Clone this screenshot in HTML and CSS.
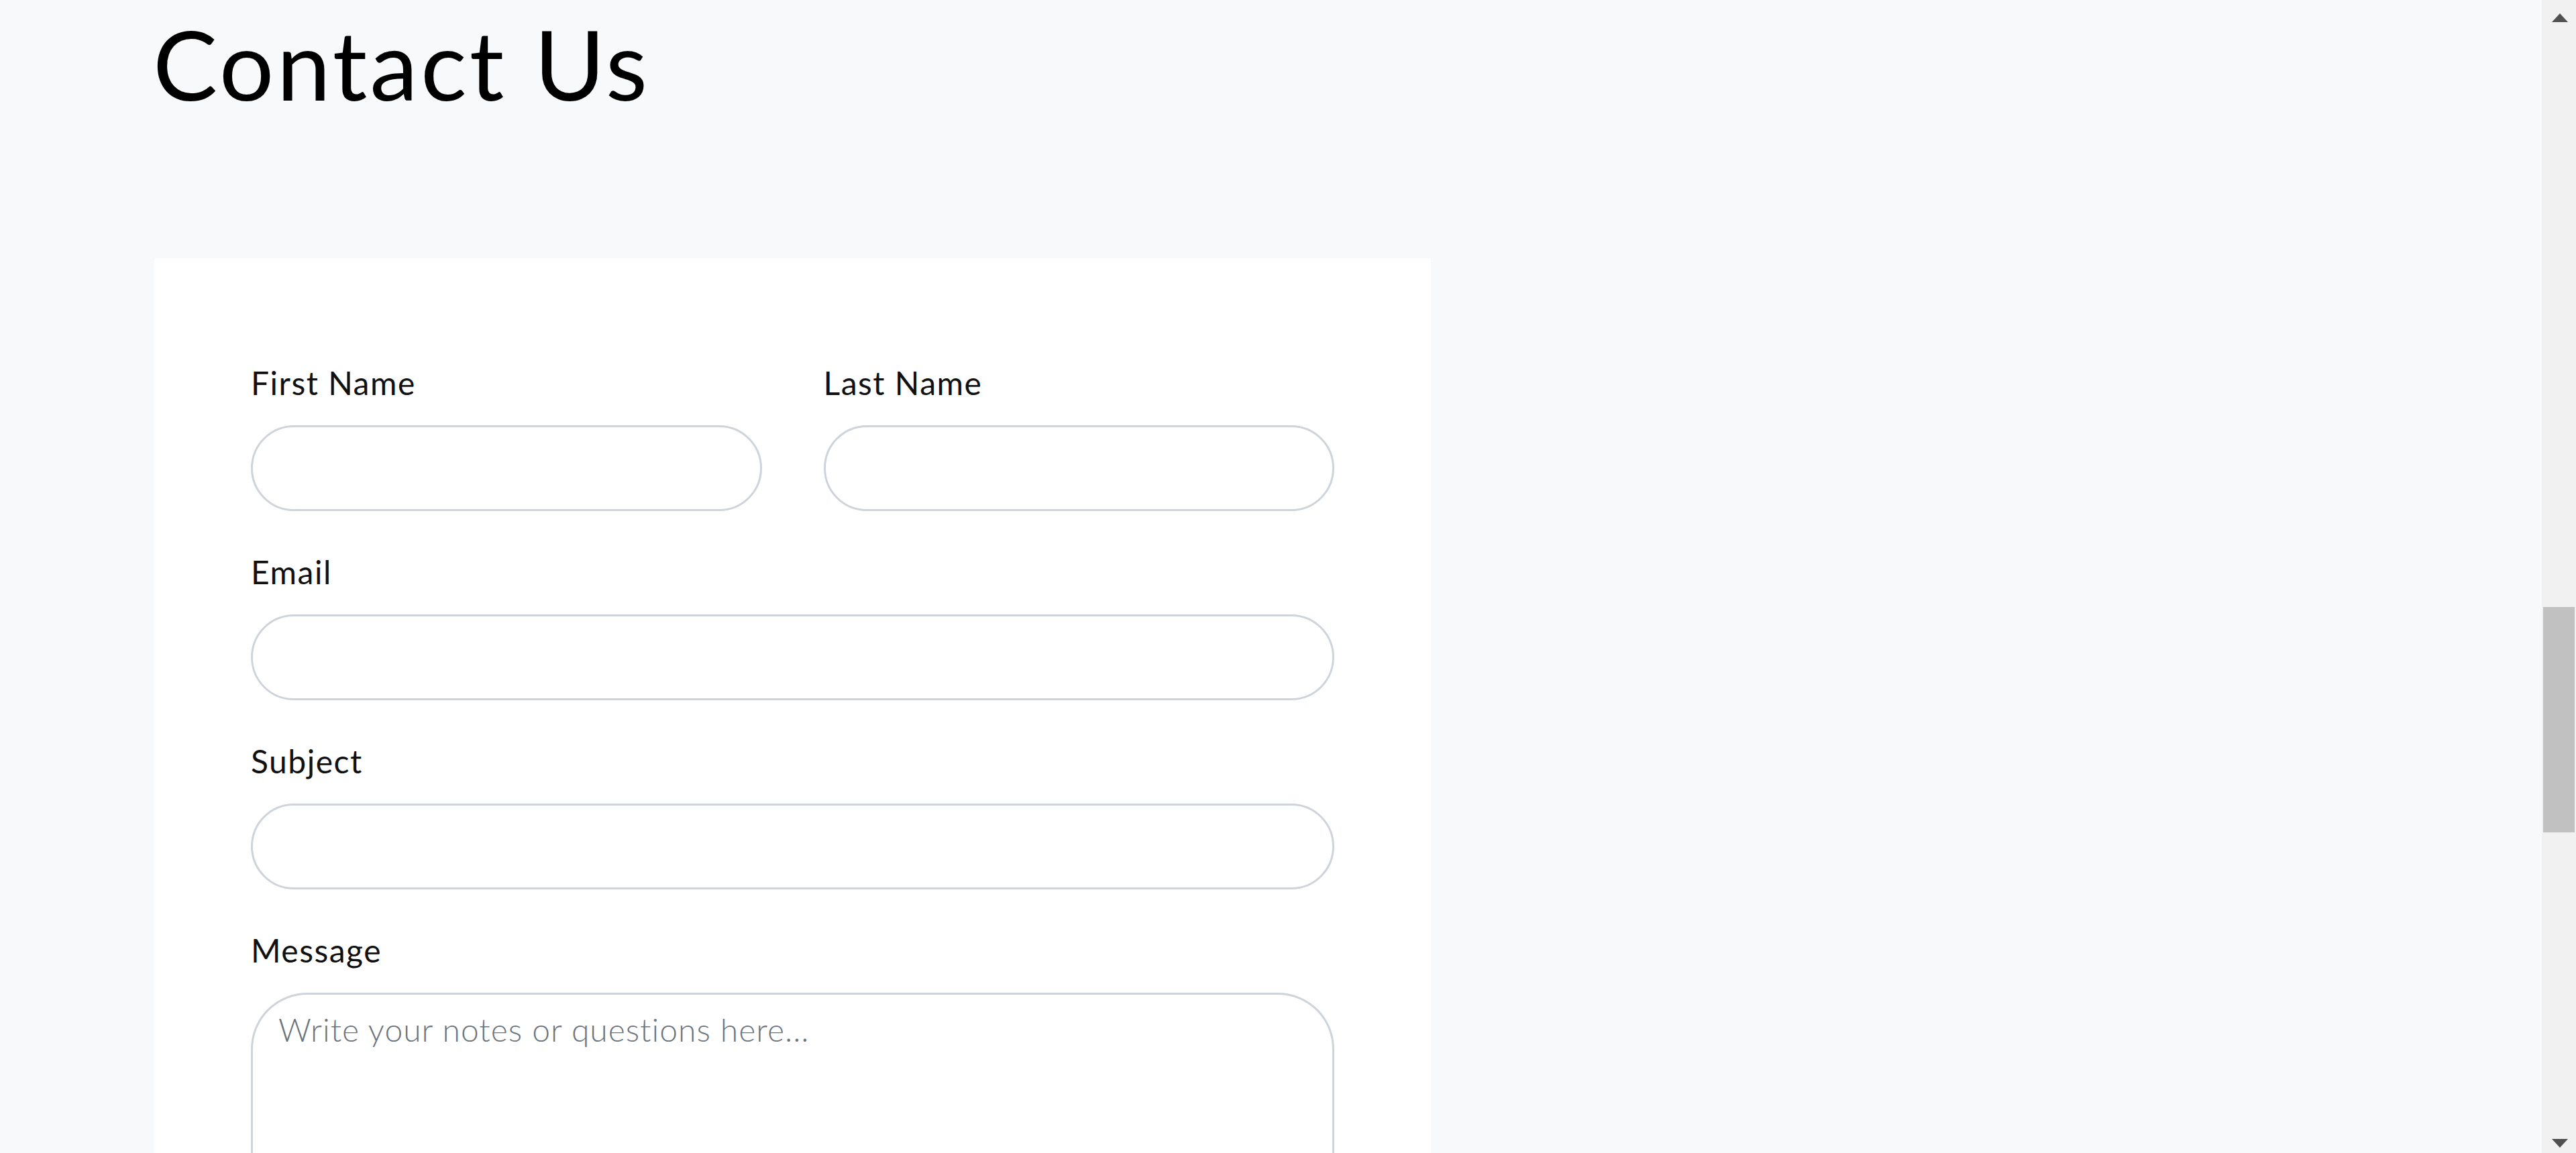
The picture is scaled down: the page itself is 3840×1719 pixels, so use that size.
FILE: index.html
```html
<!DOCTYPE html>
<html lang="en">
<head>
<meta charset="utf-8">
<title>Contact Us</title>
<link rel="stylesheet" href="styles.css">
</head>
<body>
<main class="page">
  <h1 class="title">Contact Us</h1>
  <section class="card">
    <form class="form">
      <div class="row">
        <div class="group">
          <label class="label" for="first">First Name</label>
          <input class="field" id="first" type="text">
        </div>
        <div class="group">
          <label class="label" for="last">Last Name</label>
          <input class="field" id="last" type="text">
        </div>
      </div>
      <div class="group">
        <label class="label" for="email">Email</label>
        <input class="field" id="email" type="email">
      </div>
      <div class="group">
        <label class="label" for="subject">Subject</label>
        <input class="field" id="subject" type="text">
      </div>
      <div class="group">
        <label class="label" for="message">Message</label>
        <textarea class="field area" id="message" placeholder="Write your notes or questions here..."></textarea>
      </div>
    </form>
  </section>
</main>
<div class="scrollbar">
  <div class="arrow up"></div>
  <div class="track"><div class="thumb"></div></div>
  <div class="arrow down"></div>
</div>
</body>
</html>
```

FILE: styles.css
```css
html, body {
  margin: 0;
  padding: 0;
  height: 100%;
  overflow: hidden;
  background: #f8f9fa;
}

body {
  font-family: Lato, "Open Sans", sans-serif;
  color: #000;
}

.page {
  padding: 0 0 0 230px;
  width: 1903px;
}

.title {
  margin: 8px 0 204px -2px;
  font-family: Lato, sans-serif;
  font-weight: 400;
  font-size: 144px;
  line-height: 173px;
  letter-spacing: 4px;
  color: #000;
}

.card {
  background: #fff;
  padding: 150px 144px 0 144px;
  height: 1400px;
}

.form {
  display: flex;
  flex-direction: column;
}

.row {
  display: grid;
  grid-template-columns: 1fr 1fr;
  column-gap: 92px;
}

.group {
  display: flex;
  flex-direction: column;
  margin-bottom: 55px;
}

.label {
  font-family: Lato, sans-serif;
  font-weight: 400;
  font-size: 48px;
  line-height: 72px;
  letter-spacing: 1.5px;
  margin-bottom: 27px;
  color: #111;
}

.field {
  box-sizing: border-box;
  height: 128px;
  border: 3px solid #ced4da;
  border-radius: 64px;
  background: #fff;
  padding: 0 40px;
  font-family: Lato, sans-serif;
  font-size: 48px;
  font-weight: 300;
  color: #212529;
  outline: none;
}

.area {
  height: 420px;
  border-radius: 84px;
  padding: 16px 38px;
  line-height: 72px;
  resize: none;
}

.area::placeholder {
  color: #6c757d;
  letter-spacing: 1px;
}

.scrollbar {
  position: fixed;
  top: 0;
  right: 0;
  width: 51px;
  height: 100%;
  background: #f1f1f1;
  display: flex;
  flex-direction: column;
  align-items: center;
}

.arrow {
  width: 0;
  height: 0;
  border-left: 12.5px solid transparent;
  border-right: 12.5px solid transparent;
  margin-left: 3px;
}

.arrow.up {
  margin-top: 20px;
  border-bottom: 13px solid #505050;
}

.arrow.down {
  margin-bottom: 8px;
  border-top: 13px solid #505050;
}

.track {
  flex: 1;
  width: 100%;
  position: relative;
}

.thumb {
  position: absolute;
  top: 872px;
  left: 2px;
  width: 47px;
  height: 336px;
  background: #c1c1c1;
}
```
